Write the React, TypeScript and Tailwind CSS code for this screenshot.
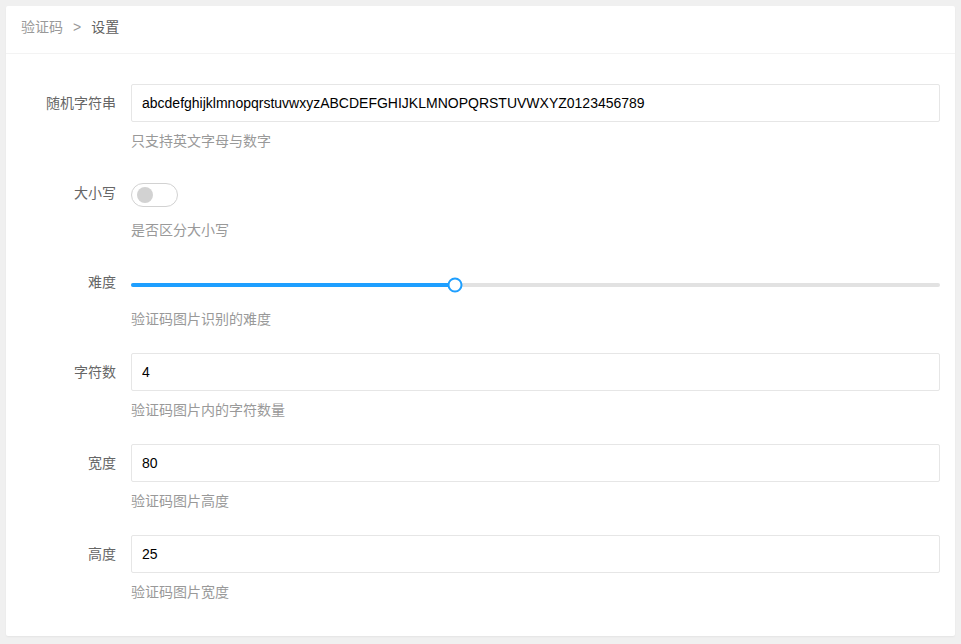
import React from "react";

const font = { fontFamily: '"Liberation Sans", "Noto Sans CJK SC", sans-serif' };

function Row({
  label,
  hint,
  tall = true,
  children,
}: {
  label: string;
  hint: string;
  tall?: boolean;
  children: React.ReactNode;
}) {
  return (
    <div className="flex mb-[23px]">
      <div
        className={`w-[95px] shrink-0 text-right text-[14px] text-[#666] flex items-center justify-end ${
          tall ? "h-[38px]" : "h-[36px]"
        }`}
      >
        {label}
      </div>
      <div className="ml-[15px] flex-1 min-w-0">
        <div className={`flex items-center ${tall ? "h-[38px]" : "h-[36px]"}`}>{children}</div>
        <div className="mt-[8px] leading-[22px] text-[14px] text-[#999]">{hint}</div>
      </div>
    </div>
  );
}

function Input({ value }: { value: string }) {
  return (
    <input
      readOnly
      value={value}
      className="w-full h-[38px] border border-[#e6e6e6] rounded-[2px] bg-white pl-[10px] text-[14px] text-[#000] outline-none"
      style={font}
    />
  );
}

export default function App() {
  const pct = 40;
  return (
    <div className="min-h-[644px] bg-[#f0f0f0] p-[6px]" style={font}>
      <div className="bg-white rounded-[2px] w-[949px] h-[630px] shadow-[0_1px_2px_rgba(0,0,0,0.05)]">
        <div className="h-[48px] border-b border-[#f3f3f3] px-[15px] pt-[11px] leading-[20px] text-[14px]">
          <span className="text-[#999]">验证码</span>
          <span className="text-[#999] mx-[10px]">&gt;</span>
          <span className="text-[#5f5f5f]">设置</span>
        </div>
        <div className="px-[15px] pt-[30px]">
          <Row label="随机字符串" hint="只支持英文字母与数字">
            <Input value="abcdefghijklmnopqrstuvwxyzABCDEFGHIJKLMNOPQRSTUVWXYZ0123456789" />
          </Row>
          <Row label="大小写" hint="是否区分大小写" tall={false}>
            <div className="w-[47px] h-[24px] rounded-full border border-[#d2d2d2] bg-white flex items-center pl-[5px] mt-[3px]">
              <div className="w-[16px] h-[16px] rounded-full bg-[#d2d2d2]" />
            </div>
          </Row>
          <Row label="难度" hint="验证码图片识别的难度" tall={false}>
            <div className="relative w-full h-[4px] bg-[#e2e2e2] rounded-[3px] mt-[6px]">
              <div className="absolute left-0 top-0 h-[4px] bg-[#1e9fff] rounded-[3px]" style={{ width: `${pct}%` }} />
              <div
                className="absolute top-1/2 w-[15px] h-[15px] -translate-x-1/2 -translate-y-1/2 rounded-full border-2 border-[#1e9fff] bg-white"
                style={{ left: `${pct}%` }}
              />
            </div>
          </Row>
          <Row label="字符数" hint="验证码图片内的字符数量">
            <Input value="4" />
          </Row>
          <Row label="宽度" hint="验证码图片高度">
            <Input value="80" />
          </Row>
          <Row label="高度" hint="验证码图片宽度">
            <Input value="25" />
          </Row>
        </div>
      </div>
    </div>
  );
}
